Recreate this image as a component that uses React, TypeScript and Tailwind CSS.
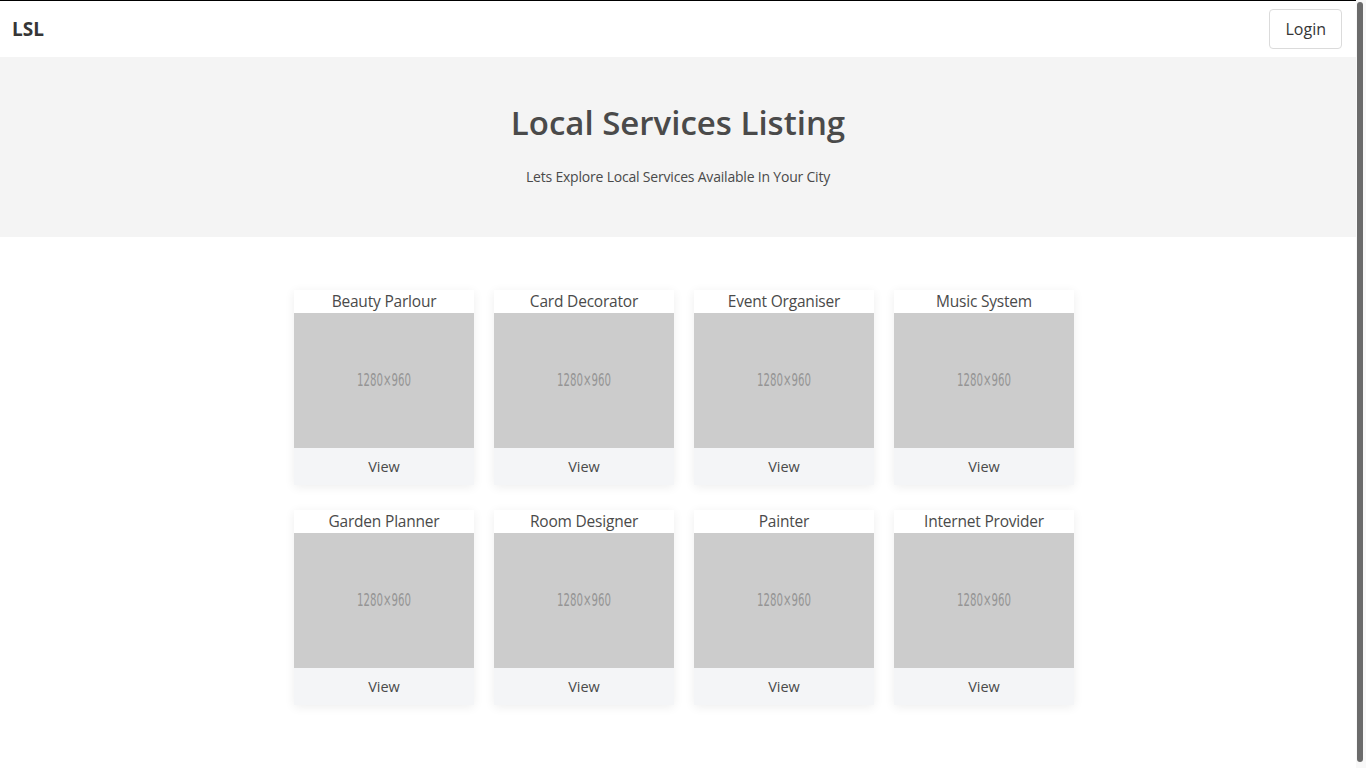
const services = [
  "Beauty Parlour",
  "Card Decorator",
  "Event Organiser",
  "Music System",
  "Garden Planner",
  "Room Designer",
  "Painter",
  "Internet Provider",
];

function ServiceCard({ name }: { name: string }) {
  return (
    <div className="w-[180px] bg-white shadow-[0_2px_10px_rgba(0,0,0,0.07)]">
      <div className="h-[23px] text-center text-[15.5px] leading-[22px] tracking-[-0.2px] text-[#4a4a4a]">{name}</div>
      <div className="h-[135px] bg-[#cccccc] flex items-center justify-center">
        <span className="text-[17px] text-[#959595] scale-x-[0.6] font-['DejaVu_Sans',sans-serif]">1280×960</span>
      </div>
      <div className="h-[37px] bg-[#f4f5f7] flex items-center justify-center text-[14.5px] text-[#4a4a4a]">
        View
      </div>
    </div>
  );
}

export default function App() {
  return (
    <div className="h-[768px] flex overflow-hidden bg-white font-['Open_Sans',sans-serif] text-[#4a4a4a]">
      <div className="flex-1 border-t border-black">
        <nav className="h-[56px] flex items-center justify-between pl-3 pr-[14px]">
          <span className="text-[19px] font-bold text-[#363636]">LSL</span>
          <button className="h-[40px] px-[15px] border border-[#dbdbdb] rounded-[4px] text-[16px] text-[#363636] bg-white">
            Login
          </button>
        </nav>
        <section className="h-[180px] bg-[#f4f4f4] flex flex-col items-center pt-[46px]">
          <h1 className="text-[33px] leading-[40px] font-semibold text-[#4a4a4a]">Local Services Listing</h1>
          <p className="mt-[23px] text-[14px] tracking-[-0.2px] text-[#4a4a4a]">
            Lets Explore Local Services Available In Your City
          </p>
        </section>
        <main className="pt-[53px] pl-3 flex justify-center">
          <div className="grid grid-cols-4 gap-x-5 gap-y-[25px]">
            {services.map((s) => (
              <ServiceCard key={s} name={s} />
            ))}
          </div>
        </main>
      </div>
      <div className="w-[10px] bg-[#f8f8f8] pl-[1px] pr-[3px] pt-[2px] pb-[6px] flex">
        <div className="flex-1 rounded-full bg-[#6b6b6b]" />
      </div>
    </div>
  );
}
